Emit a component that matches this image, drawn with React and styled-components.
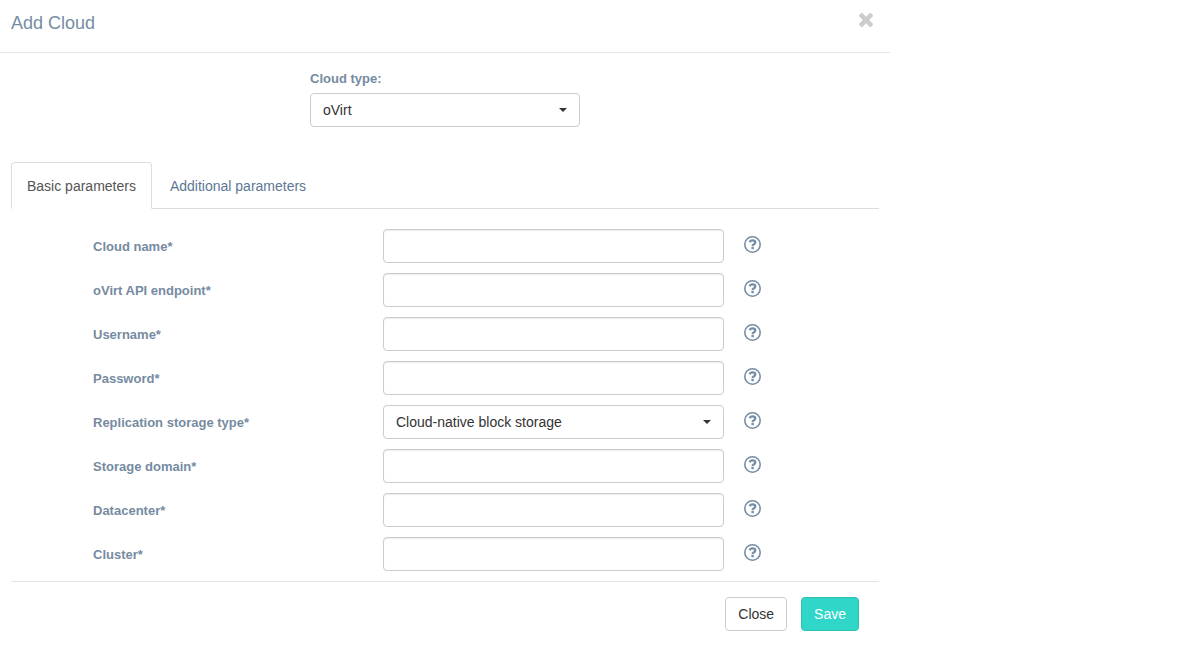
import React, { useState } from 'react';
import styled, { createGlobalStyle, css } from 'styled-components';

const FIELDS = [
  { name: 'cloudName', label: 'Cloud name*' },
  { name: 'endpoint', label: 'oVirt API endpoint*' },
  { name: 'username', label: 'Username*' },
  { name: 'password', label: 'Password*', type: 'password' },
  { name: 'storageType', label: 'Replication storage type*', options: ['Cloud-native block storage'] },
  { name: 'storageDomain', label: 'Storage domain*' },
  { name: 'datacenter', label: 'Datacenter*' },
  { name: 'cluster', label: 'Cluster*' },
];

const TABS = ['Basic parameters', 'Additional parameters'];

const GlobalStyle = createGlobalStyle`
  *, *::before, *::after {
    box-sizing: border-box;
  }

  body {
    margin: 0;
    background: #ffffff;
    color: #333333;
    font-family: 'Liberation Sans', Arial, sans-serif;
    font-size: 14px;
    line-height: 20px;
  }
`;

const Modal = styled.form`
  max-width: 890px;
`;

const Header = styled.header`
  display: flex;
  justify-content: space-between;
  align-items: flex-start;
  padding: 13px 17px 19px 11px;
  border-bottom: 1px solid #e5e5e5;
`;

const Title = styled.h4`
  margin: 0;
  color: #768da4;
  font-size: 18px;
  font-weight: 400;
  line-height: 20px;
`;

const PlainButton = styled.button`
  display: flex;
  padding: 0;
  border: 0;
  background: none;
  color: ${(props) => props.$color};
  cursor: pointer;
`;

const Body = styled.div`
  padding: 16px 11px 0;
`;

const CloudType = styled.div`
  width: 270px;
  margin: 0 auto 35px;
`;

const Label = styled.label`
  display: block;
  color: #768ba1;
  font-size: 13px;
  font-weight: 700;
  line-height: 20px;
`;

const TypeLabel = styled(Label)`
  margin-bottom: 4px;
`;

const FieldLabel = styled(Label)`
  padding-top: 1px;
`;

const control = css`
  display: block;
  width: 100%;
  height: 34px;
  padding: 6px 12px;
  border: 1px solid #cccccc;
  border-radius: 4px;
  background: #ffffff;
  color: #333333;
  font-family: inherit;
  font-size: 14px;
  line-height: 20px;
`;

const Input = styled.input`
  ${control}
  box-shadow: inset 0 1px 1px rgba(0, 0, 0, 0.075);
`;

const SelectBox = styled.div`
  position: relative;

  &::after {
    content: '';
    position: absolute;
    top: 15px;
    right: 13px;
    border-top: 4px solid #333333;
    border-right: 4px solid transparent;
    border-left: 4px solid transparent;
    pointer-events: none;
  }
`;

const SelectControl = styled.select`
  ${control}
  appearance: none;
  cursor: pointer;
`;

const TabList = styled.div`
  display: flex;
  gap: 2px;
  border-bottom: 1px solid #dddddd;
`;

const Tab = styled.button`
  margin-bottom: -1px;
  padding: 13px 15px 12px;
  border: 1px solid ${(props) => (props.$active ? '#dddddd' : 'transparent')};
  border-bottom-color: ${(props) => (props.$active ? '#ffffff' : 'transparent')};
  border-radius: 4px 4px 0 0;
  background: ${(props) => (props.$active ? '#ffffff' : 'transparent')};
  color: ${(props) => (props.$active ? '#555555' : '#5c7896')};
  font-family: inherit;
  font-size: 14px;
  line-height: 20px;
  cursor: pointer;
`;

const Fields = styled.div`
  display: grid;
  gap: 10px;
  padding: 20px 118px 10px 82px;
`;

const Row = styled.div`
  display: grid;
  grid-template-columns: 290fr 341fr 37px;
  align-items: center;
`;

const Help = styled(PlainButton)`
  justify-self: end;
  margin-bottom: 4px;
`;

const Footer = styled.footer`
  display: flex;
  justify-content: flex-end;
  gap: 14px;
  margin: 0 11px;
  padding: 15px 20px;
  border-top: 1px solid #e5e5e5;
`;

const Button = styled.button`
  padding: 6px 12px;
  border: 1px solid ${(props) => (props.$primary ? '#2ac0b2' : '#cccccc')};
  border-radius: 4px;
  background: ${(props) => (props.$primary ? '#30d6c8' : '#ffffff')};
  color: ${(props) => (props.$primary ? '#ffffff' : '#333333')};
  font-family: inherit;
  font-size: 14px;
  line-height: 20px;
  cursor: pointer;
`;

function CloseIcon() {
  return (
    <svg width="14" height="14" viewBox="302 366 1188 1188" fill="currentColor" aria-hidden="true">
      <path d="M1490 1322q0 40-28 68l-136 136q-28 28-68 28t-68-28l-294-294-294 294q-28 28-68 28t-68-28l-136-136q-28-28-28-68t28-68l294-294-294-294q-28-28-28-68t28-68l136-136q28-28 68-28t68 28l294 294 294-294q28-28 68-28t68 28l136 136q28 28 28 68t-28 68l-294 294 294 294q28 28 28 68z" />
    </svg>
  );
}

function HelpIcon() {
  return (
    <svg width="17" height="17" viewBox="0 0 17 17" fill="none" stroke="currentColor" aria-hidden="true">
      <circle cx="8.5" cy="8.5" r="7.7" strokeWidth="1.6" />
      <path d="M5.5 6.2C6.2 5 7.1 4.400 8.500 4.400C10.100 4.400 11.300 5.300 11.300 6.500C11.300 8.400 8.600 8.100 8.600 10.200" strokeWidth="2.3" />
      <path d="M7.400 11h2.400v2.200h-2.400z" fill="currentColor" stroke="none" />
    </svg>
  );
}

function Select({ id, options }) {
  return (
    <SelectBox>
      <SelectControl id={id} name={id}>
        {options.map((option) => (
          <option key={option}>{option}</option>
        ))}
      </SelectControl>
    </SelectBox>
  );
}

function App() {
  const [activeTab, setActiveTab] = useState(TABS[0]);

  const renderField = ({ name, label, type = 'text', options }) => {
    return (
      <Row key={name}>
        <FieldLabel htmlFor={name}>{label}</FieldLabel>

        {options ? <Select id={name} options={options} /> : <Input id={name} name={name} type={type} />}

        <Help type="button" $color="#768da6" aria-label={`Help: ${label}`}>
          <HelpIcon />
        </Help>
      </Row>
    );
  };

  return (
    <>
      <GlobalStyle />

      <Modal onSubmit={(e) => e.preventDefault()}>
        <Header>
          <Title>Add Cloud</Title>

          <PlainButton type="button" $color="#cccccc" aria-label="Close dialog">
            <CloseIcon />
          </PlainButton>
        </Header>

        <Body>
          <CloudType>
            <TypeLabel htmlFor="cloudType">Cloud type:</TypeLabel>
            <Select id="cloudType" options={['oVirt']} />
          </CloudType>

          <TabList role="tablist">
            {TABS.map((tab) => (
              <Tab
                key={tab}
                type="button"
                role="tab"
                aria-selected={tab === activeTab}
                $active={tab === activeTab}
                onClick={() => setActiveTab(tab)}
              >
                {tab}
              </Tab>
            ))}
          </TabList>

          {activeTab === TABS[0] && <Fields>{FIELDS.map(renderField)}</Fields>}
        </Body>

        <Footer>
          <Button type="button">Close</Button>
          <Button type="submit" $primary>
            Save
          </Button>
        </Footer>
      </Modal>
    </>
  );
}

export default App;
